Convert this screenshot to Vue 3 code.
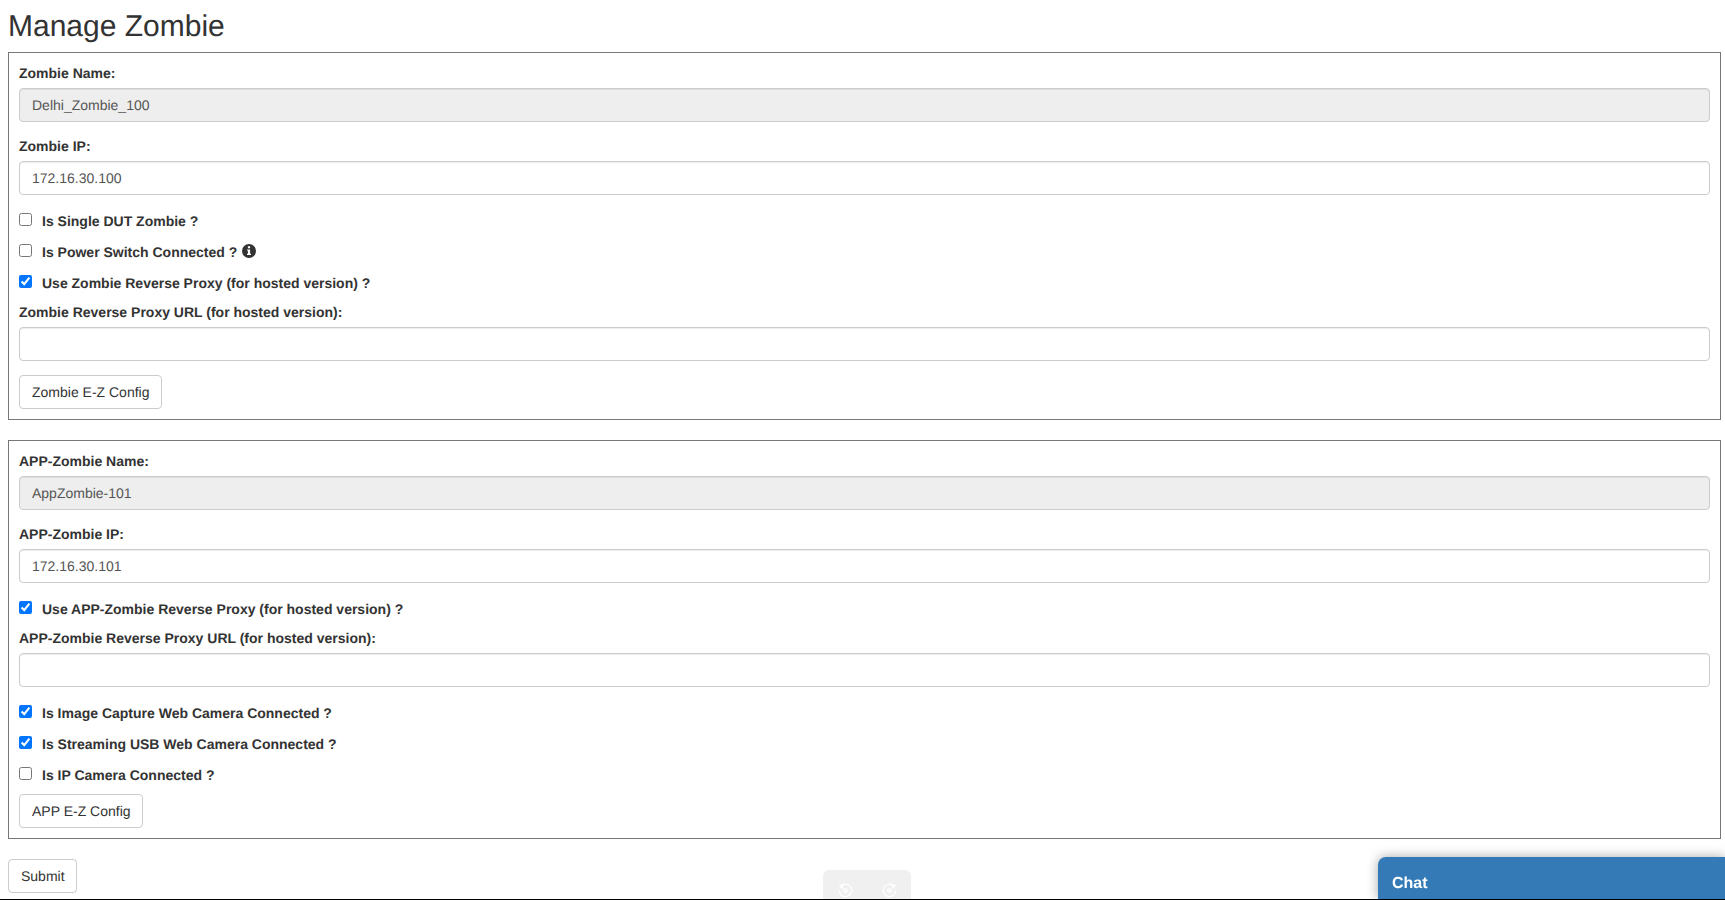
<template>
  <div class="page">
    <h2 class="title">Manage Zombie</h2>

    <section class="box">
      <div class="field">
        <label class="lbl">Zombie Name:</label>
        <input class="ctl" type="text" value="Delhi_Zombie_100" disabled />
      </div>
      <div class="field">
        <label class="lbl">Zombie IP:</label>
        <input class="ctl" type="text" value="172.16.30.100" />
      </div>
      <div class="checks">
        <label class="chk"><input type="checkbox" /><span>Is Single DUT Zombie ?</span></label>
        <label class="chk">
          <input type="checkbox" /><span>Is Power Switch Connected ?</span>
          <svg class="info" viewBox="0 0 14 14" aria-hidden="true">
            <path fill-rule="evenodd" d="M7 0a7 7 0 1 1 0 14A7 7 0 0 1 7 0ZM5.9 2.3v1.9h2.2V2.3H5.9ZM5 5.4v1.2h.9v3.2H5V11h4V9.8h-.9V5.4H5Z" />
          </svg>
        </label>
        <label class="chk"><input type="checkbox" checked /><span>Use Zombie Reverse Proxy (for hosted version) ?</span></label>
      </div>
      <div class="field">
        <label class="lbl">Zombie Reverse Proxy URL (for hosted version):</label>
        <input class="ctl" type="text" />
      </div>
      <button class="btn" type="button">Zombie E-Z Config</button>
    </section>

    <section class="box">
      <div class="field">
        <label class="lbl">APP-Zombie Name:</label>
        <input class="ctl" type="text" value="AppZombie-101" disabled />
      </div>
      <div class="field">
        <label class="lbl">APP-Zombie IP:</label>
        <input class="ctl" type="text" value="172.16.30.101" />
      </div>
      <div class="checks">
        <label class="chk"><input type="checkbox" checked /><span>Use APP-Zombie Reverse Proxy (for hosted version) ?</span></label>
      </div>
      <div class="field">
        <label class="lbl">APP-Zombie Reverse Proxy URL (for hosted version):</label>
        <input class="ctl" type="text" />
      </div>
      <div class="checks">
        <label class="chk"><input type="checkbox" checked /><span>Is Image Capture Web Camera Connected ?</span></label>
        <label class="chk"><input type="checkbox" checked /><span>Is Streaming USB Web Camera Connected ?</span></label>
        <label class="chk"><input type="checkbox" /><span>Is IP Camera Connected ?</span></label>
      </div>
      <button class="btn btn-tight" type="button">APP E-Z Config</button>
    </section>

    <button class="btn btn-tight" type="button">Submit</button>

    <div class="history">
      <svg viewBox="0 0 16 16" aria-hidden="true">
        <path class="ring" d="M3 3.6A6.6 6.6 0 1 1 1.4 8" />
        <circle cx="8" cy="8" r="1.8" class="ring" />
        <path d="M.6 2.2 5.8 1.6 4.6 6.6Z" class="tip" />
      </svg>
      <svg viewBox="0 0 16 16" aria-hidden="true">
        <path class="ring" d="M13 3.6A6.6 6.6 0 1 0 14.6 8" />
        <circle cx="8" cy="8" r="1.8" class="ring" />
        <path d="M15.4 2.2 10.2 1.6 11.4 6.6Z" class="tip" />
      </svg>
    </div>

    <div class="chat">Chat</div>
    <div class="edge"></div>
  </div>
</template>

<script setup>
</script>

<style>
html, body { background: #fff; }
</style>

<style scoped>
.page {
  box-sizing: border-box;
  height: 900px;
  padding: 0 4px 0 8px;
  overflow: hidden;
  font-family: "Liberation Sans", Arial, sans-serif;
  font-size: 14px;
  line-height: 20px;
  color: #333;
  text-rendering: geometricPrecision;
}
.title {
  margin: 0 0 9px;
  padding-top: 10px;
  font-size: 30px;
  font-weight: 500;
  line-height: 33px;
}
.box {
  border: 1px solid #777;
  padding: 10px;
  margin-bottom: 20px;
}
.field { margin-bottom: 14px; }
.lbl {
  display: block;
  margin-bottom: 5px;
  font-weight: 700;
}
.ctl {
  display: block;
  box-sizing: border-box;
  width: 100%;
  height: 34px;
  padding: 6px 12px;
  border: 1px solid #ccc;
  border-radius: 4px;
  background: #fff;
  box-shadow: inset 0 1px 1px rgba(0, 0, 0, 0.075);
  color: #555;
  font: inherit;
  text-rendering: inherit;
  outline: none;
}
.ctl:disabled {
  background: #eee;
  color: #555;
  opacity: 1;
}
.checks {
  display: flex;
  flex-direction: column;
  gap: 11px;
  margin: 16px 0 9px;
}
.chk {
  display: flex;
  align-items: flex-start;
  height: 20px;
  font-weight: 700;
}
.chk input {
  width: 13px;
  height: 13px;
  margin: 2px 10px 0 0;
  flex: none;
}
.info {
  width: 14px;
  height: 14px;
  margin: 2px 0 0 5px;
  fill: #333;
}
.btn {
  display: block;
  box-sizing: border-box;
  height: 34px;
  padding: 6px 12px;
  border: 1px solid #ccc;
  border-radius: 4px;
  background: #fff;
  color: #333;
  font: inherit;
  text-rendering: inherit;
}
.btn-tight { padding-right: 11px; }
.history {
  position: fixed;
  left: 823px;
  bottom: 0;
  display: flex;
  justify-content: center;
  gap: 29px;
  box-sizing: border-box;
  width: 88px;
  height: 30px;
  padding-top: 13px;
  border-radius: 6px 6px 0 0;
  background: #f0f0f0;
}
.history svg {
  width: 15px;
  height: 15px;
  flex: none;
}
.ring {
  fill: none;
  stroke: #fff;
  stroke-width: 1.3;
}
.tip { fill: #fff; }
.chat {
  position: fixed;
  right: 0;
  bottom: 1px;
  box-sizing: border-box;
  width: 347px;
  height: 42px;
  padding: 17px 0 0 14px;
  border-radius: 8px 0 0 0;
  background: #337ab7;
  box-shadow: 0 0 12px rgba(0, 0, 0, 0.35);
  color: #fff;
  font-size: 16px;
  font-weight: 700;
}
.edge {
  position: fixed;
  left: 0;
  right: 0;
  bottom: 0;
  height: 1px;
  background: #000;
}
</style>
